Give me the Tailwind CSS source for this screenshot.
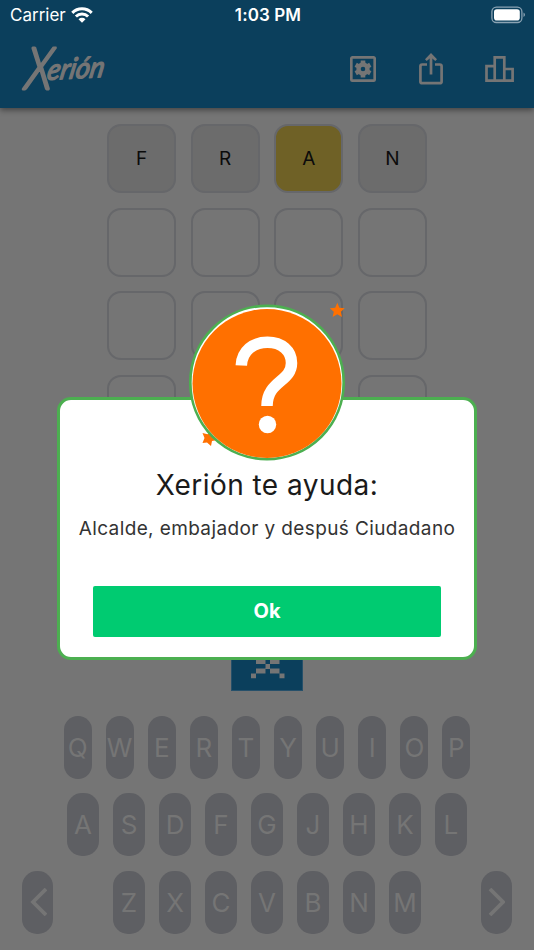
<!DOCTYPE html>
<html lang="es">
<head>
    <meta charset="UTF-8">
    <meta name="viewport" content="width=device-width, initial-scale=1.0">
    <title>Xerión</title>
    <script src="https://cdn.jsdelivr.net/npm/@tailwindcss/browser@4"></script>
</head>
<body class="relative w-[534px] h-[950px] overflow-hidden bg-[#757575] font-['Inter',sans-serif]">

    <header class="relative h-[108px] bg-[#0b3f5c] shadow-[0_2px_6px_rgba(0,0,0,0.45)]">
        <!-- Barra de estado -->
        <div class="h-[30px] pt-[1px] grid grid-cols-3 items-center pl-[10px] pr-[8px] text-white">
            <div class="flex items-center gap-[5px] text-[17px]">
                <span>Carrier</span>
                <svg class="w-[22px] h-[17px]" viewBox="0 0 22 17" fill="none" stroke="#fff" stroke-width="3">
                    <path d="M1.3 5.9a13.7 13.7 0 0 1 19.4 0M4.9 9.5a8.6 8.6 0 0 1 12.2 0"/>
                    <path d="M11 15.7L7.5 12.2a5 5 0 0 1 7 0Z" fill="#fff" stroke="none"/>
                </svg>
            </div>
            <span class="text-center text-[17px] font-semibold tracking-[0.1px]">1:03 PM</span>
            <svg class="justify-self-end w-[35px] h-[18px] -mt-[2px]" viewBox="0 0 35 18">
                <rect x="0.9" y="1.2" width="30" height="15.3" rx="4.5" fill="none" stroke="#8ba3b3" stroke-width="1.3"/>
                <rect x="3" y="3.3" width="25.8" height="11.2" rx="2.8" fill="#fff"/>
                <path d="M32.5 6.5v4.5q1.5-.7 1.5-2.2T32.5 6.5Z" fill="#8ba3b3"/>
            </svg>
        </div>

        <div class="flex items-center justify-between h-[78px] pl-[20px] pr-[20px]">
            <svg class="w-[90px] h-[60px] -mt-[2px] overflow-visible" viewBox="0 0 90 60" fill="#757575" stroke="#757575" stroke-linejoin="round" font-family="Lato" font-style="italic">
                <text x="0" y="0" font-size="58" font-weight="300" stroke-width="2.8" transform="translate(4 51) skewX(-6)" textLength="27" lengthAdjust="spacingAndGlyphs">X</text>
                <text x="0" y="0" font-size="29" font-weight="400" stroke-width="1.4" transform="translate(26 42) rotate(-3) skewX(-14)" textLength="57" lengthAdjust="spacingAndGlyphs">erión</text>
            </svg>
            <div class="flex items-center text-[#757575]">
                <svg class="w-[26px] h-[26px]" viewBox="0 0 26 26" fill="none" stroke="currentColor">
                    <rect x="1.3" y="1.3" width="23.4" height="23.4" rx="1.5" stroke-width="2.7"/>
                    <circle cx="13" cy="13" r="4.5" stroke-width="4.4"/>
                    <path d="M13 4.5v3M13 18.5v3M5.7 8.8l2.5 1.4M17.8 15.8l2.5 1.4M5.7 17.2l2.5-1.4M17.8 10.2l2.5-1.4" stroke-width="4.6"/>
                </svg>
                <svg class="w-[24px] h-[32px] ml-[43px]" viewBox="0 0 24 32" fill="none" stroke="currentColor" stroke-width="2.7">
                    <path d="M8 11.5H3.2A1.8 1.8 0 0 0 1.4 13.3V28.4A1.8 1.8 0 0 0 3.2 30.2H20.8A1.8 1.8 0 0 0 22.6 28.4V13.3A1.8 1.8 0 0 0 20.8 11.5H16M12 21.5V4"/>
                    <path d="M12 0L18 6.3L16.3 8L12 4.5L7.7 8L6 6.3Z" fill="currentColor" stroke="none"/>
                </svg>
                <svg class="w-[30px] h-[26px] ml-[41px]" viewBox="0 0 30 26" fill="none" stroke="currentColor" stroke-width="2.7">
                    <path d="M10.7 24.7H2.5V10.2H10.7M10.7 24.7V1.4H20.3V24.7ZM20.3 13H28.6V24.7H20.3"/>
                </svg>
            </div>
        </div>
    </header>

    <!-- Tablero -->
    <main class="h-[583px] pt-[16px] flex flex-col items-center justify-between">
        <div class="grid grid-cols-4 gap-[14.67px] text-[19px] text-[#0b0b0b] [&>div]:size-[69px] [&>div]:pt-[2px] [&>div]:rounded-[14px] [&>div]:border-2 [&>div]:border-[#66676a] [&>div]:flex [&>div]:items-center [&>div]:justify-center">
            <div class="bg-[#6c6c6c]">F</div>
            <div class="bg-[#6c6c6c]">R</div>
            <div class="bg-[#6f6126]">A</div>
            <div class="bg-[#6c6c6c]">N</div>
            <div></div><div></div><div></div><div></div>
            <div></div><div></div><div></div><div></div>
            <div></div><div></div><div></div><div></div>
        </div>
        <svg class="w-[72px] h-[72px]" viewBox="0 0 72 72">
            <rect x="0.5" y="0.5" width="71" height="71" fill="#0b3f5c" stroke="#26506a"/>
            <path fill="#757575" d="M25 40h9.5v5H25zM39 40h9.5v5H39zM34.5 45h4.5v5h-4.5zM25 49.5h9.5v5H25zM39 49.5h9.5v5H39zM20 54.5h5v4.7h-5zM48.500 54.5h5v4.7h-5z"/>
        </svg>
    </main>

    <!-- Teclado -->
    <section class="mt-[24.500px] flex flex-col items-center gap-[14.500px] text-[26px] text-[#757575]">
        <div class="flex gap-[14.100px] [&>button]:w-[28px] [&>button]:h-[63px] [&>button]:rounded-[14px] [&>button]:bg-[#5e5f63] [&>button]:flex [&>button]:items-center [&>button]:justify-center">
            <button>Q</button><button>W</button><button>E</button><button>R</button><button>T</button><button>Y</button><button>U</button><button>I</button><button>O</button><button>P</button>
        </div>
        <div class="flex gap-[14.300px] [&>button]:w-[31.700px] [&>button]:h-[63px] [&>button]:rounded-[15px] [&>button]:bg-[#5e5f63] [&>button]:flex [&>button]:items-center [&>button]:justify-center">
            <button>A</button><button>S</button><button>D</button><button>F</button><button>G</button><button>J</button><button>H</button><button>K</button><button>L</button>
        </div>
        <div class="flex gap-[14.300px] [&>button]:w-[31.700px] [&>button]:h-[63px] [&>button]:rounded-[15px] [&>button]:bg-[#5e5f63] [&>button]:flex [&>button]:items-center [&>button]:justify-center">
            <button class="mr-[45.500px]">
                <svg class="w-[18px] h-[28px]" viewBox="0 0 18 28" fill="none" stroke="currentColor" stroke-width="3.8"><path d="M17 1L4 14L17 27"/></svg>
            </button>
            <button>Z</button><button>X</button><button>C</button><button>V</button><button>B</button><button>N</button><button>M</button>
            <button class="ml-[45.500px]">
                <svg class="w-[18px] h-[28px]" viewBox="0 0 18 28" fill="none" stroke="currentColor" stroke-width="3.8"><path d="M3 1L16 14L3 27"/></svg>
            </button>
        </div>
    </section>

    <!-- Diálogo de ayuda -->
    <div class="absolute left-[57px] top-[397px] w-[420px] h-[263px] bg-white border-3 border-[#4caf50] rounded-[14px] flex flex-col items-center">
        <h2 class="mt-[67px] text-[28px] leading-[36px] text-[#1a1a1a] tracking-[0.45px] whitespace-nowrap">Xerión te ayuda:</h2>
        <p class="mt-[13px] text-[19px] leading-[26px] text-[#333] tracking-[0.38px] whitespace-nowrap">Alcalde, embajador y despuś Ciudadano</p>
        <button class="mt-[44px] pb-[1px] w-[348px] h-[51px] rounded-[2px] bg-[#00cb71] text-white text-[20px] font-bold">Ok</button>
    </div>
    <svg class="absolute left-[180px] top-[290px] w-[180px] h-[180px]" viewBox="0 0 180 180">
        <path fill="#ff7000" d="M157.300 12.800l2.100 4.900 5.400.5-4 3.600 1.200 5.300-4.700-2.800-4.700 2.800 1.200-5.300-4-3.600 5.400-.5z"/>
        <path fill="#ff7000" d="M22.500 143l5 1.200 5-3.700v6l5 3.500-5.500 1-1 5-4-3.500-4.500.5 2-5z"/>
        <circle cx="87" cy="92.500" r="76.700" fill="#fff" stroke="#4caf50" stroke-width="2.700"/>
        <circle cx="87" cy="93.500" r="74.500" fill="#ff7000"/>
        <path d="M61.300 75.500C62 61 73 52.300 87.500 52.300C102 52.300 111.500 61 111.500 73C111.500 92 87 91 87 116" fill="none" stroke="#fff" stroke-width="11.500"/>
        <circle cx="87.500" cy="134.500" r="8.700" fill="#fff"/>
    </svg>

</body>
</html>
